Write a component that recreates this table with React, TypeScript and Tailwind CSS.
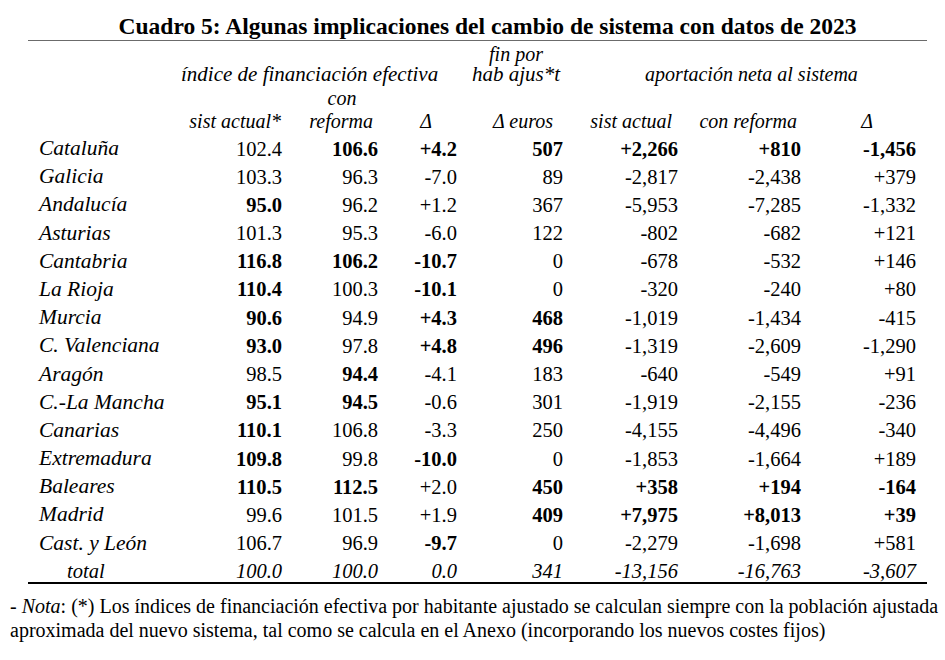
type Cell = { v: string; b?: boolean };

const rows: { name: string; cells: Cell[] }[] = [
  { name: "Cataluña", cells: [{ v: "102.4" }, { v: "106.6", b: true }, { v: "+4.2", b: true }, { v: "507", b: true }, { v: "+2,266", b: true }, { v: "+810", b: true }, { v: "-1,456", b: true }] },
  { name: "Galicia", cells: [{ v: "103.3" }, { v: "96.3" }, { v: "-7.0" }, { v: "89" }, { v: "-2,817" }, { v: "-2,438" }, { v: "+379" }] },
  { name: "Andalucía", cells: [{ v: "95.0", b: true }, { v: "96.2" }, { v: "+1.2" }, { v: "367" }, { v: "-5,953" }, { v: "-7,285" }, { v: "-1,332" }] },
  { name: "Asturias", cells: [{ v: "101.3" }, { v: "95.3" }, { v: "-6.0" }, { v: "122" }, { v: "-802" }, { v: "-682" }, { v: "+121" }] },
  { name: "Cantabria", cells: [{ v: "116.8", b: true }, { v: "106.2", b: true }, { v: "-10.7", b: true }, { v: "0" }, { v: "-678" }, { v: "-532" }, { v: "+146" }] },
  { name: "La Rioja", cells: [{ v: "110.4", b: true }, { v: "100.3" }, { v: "-10.1", b: true }, { v: "0" }, { v: "-320" }, { v: "-240" }, { v: "+80" }] },
  { name: "Murcia", cells: [{ v: "90.6", b: true }, { v: "94.9" }, { v: "+4.3", b: true }, { v: "468", b: true }, { v: "-1,019" }, { v: "-1,434" }, { v: "-415" }] },
  { name: "C. Valenciana", cells: [{ v: "93.0", b: true }, { v: "97.8" }, { v: "+4.8", b: true }, { v: "496", b: true }, { v: "-1,319" }, { v: "-2,609" }, { v: "-1,290" }] },
  { name: "Aragón", cells: [{ v: "98.5" }, { v: "94.4", b: true }, { v: "-4.1" }, { v: "183" }, { v: "-640" }, { v: "-549" }, { v: "+91" }] },
  { name: "C.-La Mancha", cells: [{ v: "95.1", b: true }, { v: "94.5", b: true }, { v: "-0.6" }, { v: "301" }, { v: "-1,919" }, { v: "-2,155" }, { v: "-236" }] },
  { name: "Canarias", cells: [{ v: "110.1", b: true }, { v: "106.8" }, { v: "-3.3" }, { v: "250" }, { v: "-4,155" }, { v: "-4,496" }, { v: "-340" }] },
  { name: "Extremadura", cells: [{ v: "109.8", b: true }, { v: "99.8" }, { v: "-10.0", b: true }, { v: "0" }, { v: "-1,853" }, { v: "-1,664" }, { v: "+189" }] },
  { name: "Baleares", cells: [{ v: "110.5", b: true }, { v: "112.5", b: true }, { v: "+2.0" }, { v: "450", b: true }, { v: "+358", b: true }, { v: "+194", b: true }, { v: "-164", b: true }] },
  { name: "Madrid", cells: [{ v: "99.6" }, { v: "101.5" }, { v: "+1.9" }, { v: "409", b: true }, { v: "+7,975", b: true }, { v: "+8,013", b: true }, { v: "+39", b: true }] },
  { name: "Cast. y León", cells: [{ v: "106.7" }, { v: "96.9" }, { v: "-9.7", b: true }, { v: "0" }, { v: "-2,279" }, { v: "-1,698" }, { v: "+581" }] },
];

const totals = ["100.0", "100.0", "0.0", "341", "-13,156", "-16,763", "-3,607"];

const grid = "grid grid-cols-[172px_82px_96px_79px_106px_115px_123px_115px]";

export default function App() {
  return (
    <div className="h-[660px] w-[945px] overflow-hidden bg-white font-['Liberation_Serif','Times_New_Roman',serif] text-black">
      <h1 className="pl-[30px] pt-[13px] text-center text-[23.5px] font-bold leading-[27px]">
        Cuadro 5: Algunas implicaciones del cambio de sistema con datos de 2023
      </h1>

      <div className="ml-[28px] w-[899px] border-t border-[#6b6b6b] text-[20.5px]">
        {/* header */}
        <div className="text-[20px] italic leading-none">
          <div className={`${grid} h-[22px] items-center pt-[4px]`}>
            <div className="col-start-5 pl-[12px] text-center leading-[16px] whitespace-nowrap">fin por</div>
          </div>
          <div className={`${grid} h-[21px] items-center pt-[2px]`}>
            <div className="col-span-4 col-start-1 whitespace-nowrap pl-[153px] text-[21px] leading-[17px]">
              índice de financiación efectiva
            </div>
            <div className="pl-[12px] text-center whitespace-nowrap text-[21px] leading-[17px]">hab ajus*t</div>
            <div className="col-span-3 pl-[24px] text-center whitespace-nowrap leading-[17px]">
              aportación neta al sistema
            </div>
          </div>
          <div className={`${grid} h-[24px] items-center pt-[4px]`}>
            <div className="col-start-3 pl-[24px] text-center">con</div>
          </div>
          <div className={`${grid} h-[23px] items-center pt-[2px]`}>
            <div className="col-start-2 flex justify-end whitespace-nowrap pr-[1px]">sist actual*</div>
            <div className="pr-[5px] text-right">reforma</div>
            <div className="pr-[25px] text-right">Δ</div>
            <div className="pr-[10px] text-right whitespace-nowrap">Δ euros</div>
            <div className="pr-[6px] text-right whitespace-nowrap">sist actual</div>
            <div className="pr-[4px] text-right whitespace-nowrap">con reforma</div>
            <div className="pr-[43px] text-right">Δ</div>
          </div>
        </div>

        {/* body */}
        {rows.map((r) => (
          <div key={r.name} className={`${grid} h-[28.2px] items-center pt-[7px] leading-none`}>
            <div className="pl-[11px] text-[21.5px] italic whitespace-nowrap">{r.name}</div>
            {r.cells.map((c, i) => (
              <div key={i} className={c.b ? "text-right font-bold" : "text-right"}>
                {c.v}
              </div>
            ))}
          </div>
        ))}
        <div className={`${grid} h-[28.2px] items-center pt-[7px] italic leading-none`}>
          <div className="pl-[39px]">total</div>
          {totals.map((t, i) => (
            <div key={i} className="text-right">
              {t}
            </div>
          ))}
        </div>
        <div className="h-[2px] bg-black" />
      </div>

      <p className="mt-[10px] pl-[10px] text-[20px] leading-[24px] whitespace-nowrap">
        - <i>Nota</i>: (*) Los índices de financiación efectiva por habitante ajustado se calculan siempre con la población ajustada
        <br />
        aproximada del nuevo sistema, tal como se calcula en el Anexo (incorporando los nuevos costes fijos)
      </p>
    </div>
  );
}
